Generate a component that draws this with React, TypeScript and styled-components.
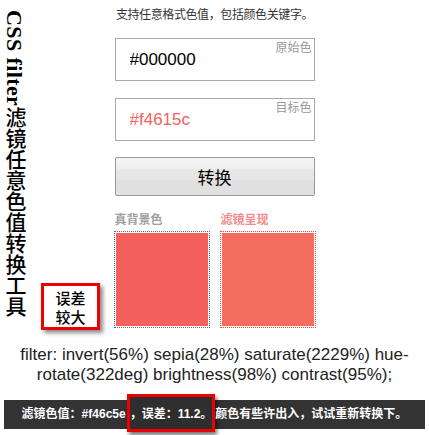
import styled, { createGlobalStyle } from "styled-components";

const GlobalStyle = createGlobalStyle`
  html, body {
    margin: 0;
    padding: 0;
    background: #fff;
  }
  body {
    font-family: "Liberation Sans", "Noto Sans CJK SC", sans-serif;
    color: #222;
  }
`;

const Page = styled.div`
  width: 429px;
  height: 435px;
  overflow: hidden;
`;

const Top = styled.div`
  display: grid;
  grid-template-columns: 1fr 200px 1fr;
`;

const Side = styled.div`
  display: flex;
  align-items: flex-start;
  padding-left: 3px;
`;

const Title = styled.h1`
  margin: 0;
  padding-top: 10px;
  writing-mode: vertical-rl;
  font-family: "Liberation Serif", "Noto Sans CJK SC", serif;
  font-size: 21px;
  line-height: 22px;
  font-weight: 700;
  color: #000;
`;

const TitleLatin = styled.span`
  font-size: 22px;
  letter-spacing: 0.4px;
`;

const TitleCjk = styled.span`
  font-weight: 500;
`;

const Badge = styled.div`
  align-self: flex-end;
  margin: 0 0 -2px 16px;
  width: 59px;
  height: 47px;
  box-sizing: border-box;
  border: 3px solid #e00;
  background: #fff;
  box-shadow: 3px 3px 4px rgba(0, 0, 0, 0.45);
  display: flex;
  align-items: center;
  justify-content: center;
  text-align: center;
  font-family: "Noto Sans CJK SC", sans-serif;
  font-size: 15px;
  line-height: 19px;
  font-weight: 500;
  color: #000;
`;

const Main = styled.div`
  padding-top: 5px;
  display: flex;
  flex-direction: column;
`;

const Hint = styled.p`
  margin: 0 0 13px;
  display: flex;
  justify-content: center;
  white-space: nowrap;
  font-size: 12px;
  line-height: 20px;
  letter-spacing: -0.4px;
  color: #333;
`;

const Field = styled.label`
  position: relative;
  display: block;
  margin-bottom: 17px;
  &:last-of-type {
    margin-bottom: 16px;
  }
`;

const Input = styled.input<{ $color: string }>`
  display: block;
  width: 100%;
  height: 43px;
  box-sizing: border-box;
  margin: 0;
  padding: 0 0 0 14px;
  border: 1px solid #aaa;
  border-radius: 0;
  outline: none;
  font-family: "Liberation Sans", sans-serif;
  font-size: 17px;
  color: ${(p) => p.$color};
  background: #fff;
`;

const FieldTag = styled.span`
  position: absolute;
  top: 4px;
  right: 3px;
  font-size: 12px;
  line-height: 12px;
  color: #999;
`;

const ConvertButton = styled.button`
  height: 39px;
  margin: 0 0 16px;
  border: 1px solid #999;
  border-radius: 2px;
  background: linear-gradient(#f4f4f4, #f0f0f0 28%, #e8e8e8 30%, #e6e6e6 58%, #e1e1e1 60%, #dfdfdf);
  font-family: "Noto Sans CJK SC", sans-serif;
  font-size: 17px;
  color: #000;
  cursor: pointer;
`;

const Preview = styled.div`
  display: grid;
  grid-template-columns: 96px 96px;
  column-gap: 10px;
  margin-left: -1px;
`;

const PreviewItem = styled.div`
  display: flex;
  flex-direction: column;
`;

const PreviewLabel = styled.span<{ $color: string }>`
  font-size: 12px;
  line-height: 16px;
  margin: 0 0 3px 1px;
  font-weight: 700;
  color: ${(p) => p.$color};
`;

const Swatch = styled.div<{ $border: string; $fill: string }>`
  height: 97px;
  box-sizing: border-box;
  border: 1px dotted ${(p) => p.$border};
  padding: 1px;
  &::after {
    content: "";
    display: block;
    height: 100%;
    background: ${(p) => p.$fill};
  }
`;

const FilterCode = styled.p`
  margin: 17px 0 0;
  padding: 0 10px;
  text-align: center;
  font-size: 17px;
  line-height: 20px;
  color: #222;
`;

const ResultBar = styled.div`
  margin: 15px 4px 0;
  height: 29px;
  background: #333;
  color: #fff;
  text-align: center;
  white-space: nowrap;
  font-size: 12px;
  line-height: 29px;
  font-weight: 700;
`;

const Mark = styled.span`
  display: inline-block;
  margin: -6px 0 -3px 1px;
  padding: 3px 0 0;
  border: 3px solid #e00;
  background: #2e2e2e;
  box-shadow: 2px 3px 4px rgba(0, 0, 0, 0.55);
`;

export default function App() {
  return (
    <Page>
      <GlobalStyle />
      <Top>
        <Side>
          <Title>
            <TitleLatin>CSS filter</TitleLatin>
            <TitleCjk>滤镜任意色值转换工具</TitleCjk>
          </Title>
          <Badge>
            误差
            <br />
            较大
          </Badge>
        </Side>
        <Main>
          <Hint>支持任意格式色值，包括颜色关键字。</Hint>
          <Field>
            <Input $color="#000" value="#000000" readOnly />
            <FieldTag>原始色</FieldTag>
          </Field>
          <Field>
            <Input $color="#f4615c" value="#f4615c" readOnly />
            <FieldTag>目标色</FieldTag>
          </Field>
          <ConvertButton type="button">转换</ConvertButton>
          <Preview>
            <PreviewItem>
              <PreviewLabel $color="#a0a0a0">真背景色</PreviewLabel>
              <Swatch $border="#666" $fill="#f4615c" />
            </PreviewItem>
            <PreviewItem>
              <PreviewLabel $color="#f58a8a">滤镜呈现</PreviewLabel>
              <Swatch $border="#f44" $fill="#f46c5e" />
            </PreviewItem>
          </Preview>
        </Main>
        <div />
      </Top>
      <FilterCode>
        filter: invert(56%) sepia(28%) saturate(2229%) hue-rotate(322deg) brightness(98%) contrast(95%);
      </FilterCode>
      <ResultBar>
        滤镜色值：#f46c5e<Mark>，误差：11.2。</Mark>颜色有些许出入，试试重新转换下。
      </ResultBar>
    </Page>
  );
}
